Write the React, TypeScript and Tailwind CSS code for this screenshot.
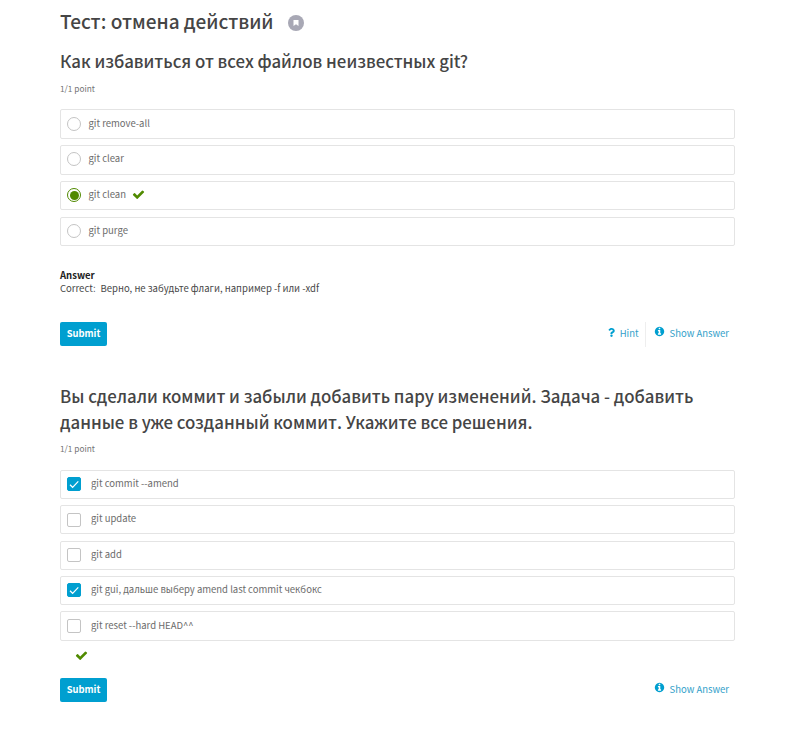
import { FaQuestion } from "react-icons/fa";

type Item = { text: string; box: string; label: string; checked?: boolean };

const radios: Item[] = [
  { text: "git remove-all", box: "h-[30px] mb-1.5 pt-[7px]", label: "-mt-px" },
  { text: "git clear", box: "h-[30px] mb-1.5 pt-1.5", label: "-mt-px" },
  { text: "git clean", box: "h-[29px] mb-[7px] pt-1.5", label: "-mt-px", checked: true },
  { text: "git purge", box: "h-[29px] pt-1.5", label: "-mt-px" },
];

const checks: Item[] = [
  { text: "git commit --amend", box: "h-[29px] mb-1.5 pt-1.5", label: "-mt-px", checked: true },
  { text: "git update", box: "h-[29px] mb-[7px] pt-[7px]", label: "-mt-[2px]" },
  { text: "git add", box: "h-[29px] mb-1.5 pt-1.5", label: "-mt-px" },
  { text: "git gui, дальше выберу amend last commit чекбокс", box: "h-[29px] mb-1.5 pt-1.5", label: "-mt-px", checked: true },
  { text: "git reset --hard HEAD^^", box: "h-[30px] pt-[7px]", label: "-mt-px" },
];

function Tick({ className }: { className: string }) {
  return (
    <svg viewBox="0 0 1792 1792" className={`size-[13px] shrink-0 text-[#508a00] ${className}`} fill="currentColor">
      <path d="M1671 566q0 40-28 68l-724 724-136 136q-28 28-68 28t-68-28l-136-136-362-362q-28-28-28-68t28-68l136-136q28-28 68-28t68 28l294 295 656-657q28-28 68-28t68 28l136 136q28 28 28 68z" />
    </svg>
  );
}

function Radio({ item }: { item: Item }) {
  return (
    <div className={`flex items-start rounded-[2px] border border-[#e4e4e4] pl-1.5 ${item.box}`}>
      <span className={`flex size-3.5 shrink-0 items-center justify-center rounded-full border ${item.checked ? "border-[#508a00]" : "border-[#c4c4c4]"}`}>
        {item.checked && <span className="size-[9px] rounded-full bg-[#508a00]" />}
      </span>
      <span className={`ml-[7.5px] text-[9.5px] leading-[14px] ${item.label}`}>{item.text}</span>
      {item.checked && <Tick className="ml-1.5" />}
    </div>
  );
}

function Check({ item }: { item: Item }) {
  return (
    <div className={`flex items-start rounded-[2px] border border-[#e4e4e4] pl-1.5 ${item.box}`}>
      <span className={`flex size-3.5 shrink-0 items-center justify-center rounded-[2px] border ${item.checked ? "border-[#009fd0] bg-[#009fd0]" : "border-[#c4c4c4]"}`}>
        {item.checked && (
          <svg viewBox="0 0 12 12" className="size-3" fill="none" stroke="white" strokeWidth="1.2">
            <path d="M2 6.8 L4.6 9.3 L10.3 3.3" />
          </svg>
        )}
      </span>
      <span className={`ml-2.5 text-[9.5px] leading-[14px] ${item.label}`}>{item.text}</span>
    </div>
  );
}

function Submit() {
  return (
    <button className="h-6 w-[47px] rounded-[2px] bg-[#009fd0] text-[9.4px] font-bold leading-[22px] text-white">
      <span className="block h-6">Submit</span>
    </button>
  );
}

function ShowAnswer() {
  return (
    <span className="flex items-start">
      <svg viewBox="0 0 1792 1792" className="mr-[5px] mt-1 size-[11px] text-[#009fd0]" fill="currentColor">
        <path d="M1152 1376v-160q0-14-9-23t-23-9h-96v-512q0-14-9-23t-23-9h-320q-14 0-23 9t-9 23v160q0 14 9 23t23 9h96v320h-96q-14 0-23 9t-9 23v160q0 14 9 23t23 9h448q14 0 23-9t9-23zm-128-896v-160q0-14-9-23t-23-9h-192q-14 0-23 9t-9 23v160q0 14 9 23t23 9h192q14 0 23-9t9-23zm640 416q0 209-103 385.5t-279.5 279.5-385.5 103-385.5-103-279.5-279.5-103-385.5 103-385.5 279.5-279.5 385.5-103 385.5 103 279.5 279.5 103 385.5z" />
      </svg>
      <span className="text-[9.5px] leading-[22px]">Show Answer</span>
    </span>
  );
}

export default function App() {
  return (
    <main className="h-[730px] w-[797px] overflow-hidden whitespace-nowrap bg-white pl-[60px] pr-[62px] font-['Noto_Sans_CJK_SC','Noto_Sans',sans-serif] text-[#6c6c6c]">
      <div className="flex h-[45px] items-start pt-[7px]">
        <h1 className="text-[19px] font-medium leading-7 text-[#454545]">Тест: отмена действий</h1>
        <span className="ml-[14.5px] mt-2 flex size-4 items-center justify-center rounded-full bg-[#a8a8b5]">
          <svg viewBox="0 0 6 6" className="size-1.5" fill="white">
            <path d="M0.5 0H5.5V6L3 4.2L0.5 6Z" />
          </svg>
        </span>
      </div>

      <section>
        <h2 className="h-8 text-[16.83px] font-medium leading-8 text-[#454545]">Как избавиться от всех файлов неизвестных git?</h2>
        <p className="mt-1 h-[28px] text-[8.3px] leading-[14px] text-[#757575]">1/1 point</p>
        {radios.map((item) => <Radio key={item.text} item={item} />)}
        <div className="mt-[23px] h-[53px] text-[9.53px] leading-[13px] text-[#484848]">
          <p className="font-bold text-[#222]">Answer</p>
          <p>Correct:<span className="ml-[5px]">Верно, не забудьте флаги, например -f или -xdf</span></p>
        </div>
        <div className="flex h-6 items-start justify-between">
          <Submit />
          <div className="flex pr-1.5 text-[#349fca]">
            <span className="flex items-start">
              <FaQuestion className="mr-[4px] mt-[6px] size-[9px] text-[#009fd0]" />
              <span className="text-[9.5px] leading-[22px]">Hint</span>
            </span>
            <span className="ml-1.5 mr-2 h-[25px] w-px bg-[#eee]" />
            <ShowAnswer />
          </div>
        </div>
      </section>

      <section className="mt-[37px]">
        <h2 className="text-[16.83px] font-medium leading-[26px] text-[#454545]">
          Вы сделали коммит и забыли добавить пару изменений. Задача - добавить
          <br />
          данные в уже созданный коммит. Укажите все решения.
        </h2>
        <p className="mt-[6px] h-[29px] text-[8.3px] leading-[14px] text-[#757575]">1/1 point</p>
        {checks.map((item) => <Check key={item.text} item={item} />)}
        <div className="h-[37px] pl-[15px] pt-2">
          <Tick className="" />
        </div>
        <div className="flex h-6 items-start justify-between">
          <Submit />
          <div className="flex pr-1.5 text-[#349fca]">
            <ShowAnswer />
          </div>
        </div>
      </section>
    </main>
  );
}
